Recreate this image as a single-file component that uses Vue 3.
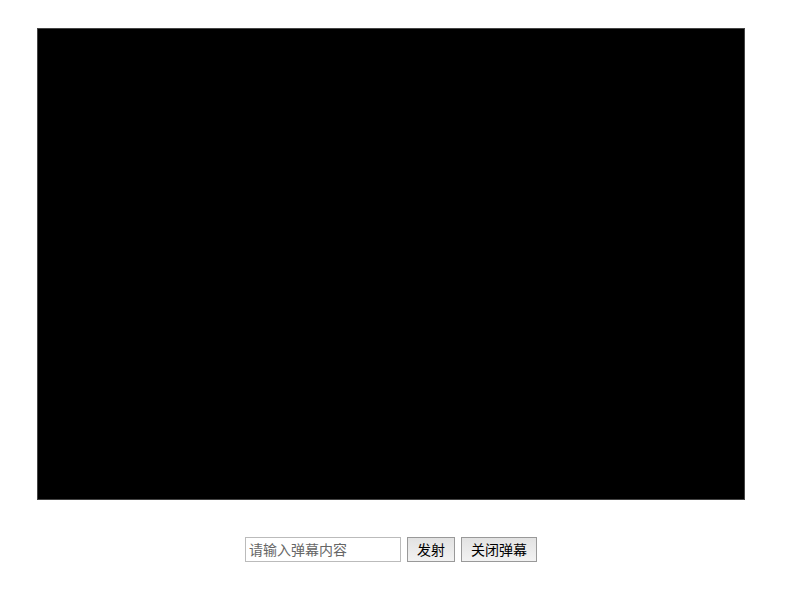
<script setup>
import { ref, onBeforeUnmount } from 'vue'

const content = ref('')
const opened = ref(true)
const list = ref([])
let id = 0
const timers = []

// send one line of text over the screen
const send = () => {
  const text = content.value.trim()
  if (!text || !opened.value) return
  const item = { id: id++, text, top: Math.floor(Math.random() * 90) }
  list.value.push(item)
  content.value = ''
  timers.push(setTimeout(() => {
    list.value = list.value.filter(i => i.id !== item.id)
  }, 8000))
}

const toggle = () => {
  opened.value = !opened.value
  if (!opened.value) list.value = []
}

onBeforeUnmount(() => timers.forEach(clearTimeout))
</script>

<template>
  <div class="danmu">
    <div class="screen">
      <span
        v-for="item in list"
        :key="item.id"
        class="item"
        :style="{ top: item.top + '%' }"
      >{{ item.text }}</span>
    </div>
    <form class="controls" @submit.prevent="send">
      <input v-model="content" class="text" type="text" placeholder="请输入弹幕内容" aria-label="请输入弹幕内容">
      <button class="btn" type="submit">发射</button>
      <button class="btn" type="button" @click="toggle">{{ opened ? '关闭弹幕' : '打开弹幕' }}</button>
    </form>
  </div>
</template>

<style>
body {
  background: #fff;
}
</style>

<style scoped>
.danmu {
  padding: 28px 55px 20px 37px;
  font-family: "Liberation Sans", "Noto Sans CJK SC", sans-serif;
}

.screen {
  position: relative;
  box-sizing: border-box;
  aspect-ratio: 3 / 2;
  overflow: hidden;
  background: #000;
  border: 1px solid #444;
}

.item {
  position: absolute;
  left: 100%;
  color: #fff;
  white-space: nowrap;
  animation: move 8s linear;
}

@keyframes move {
  to {
    left: -100%;
  }
}

.controls {
  display: flex;
  justify-content: center;
  gap: 6px;
  margin-top: 37px;
}

.text,
.btn {
  box-sizing: border-box;
  height: 25px;
  margin: 0;
  font-family: inherit;
  font-size: 14px;
  line-height: 20px;
  border-radius: 0;
}

.text {
  width: 156px;
  padding: 0 3px;
  color: #222;
  background: #fff;
  border: 1px solid #bbb;
}

.text::placeholder {
  color: #666;
  opacity: 1;
}

.btn {
  padding: 0 9px;
  color: #000;
  background: linear-gradient(#e2e2e2, #f2f2f2);
  border: 1px solid #999;
}
</style>
